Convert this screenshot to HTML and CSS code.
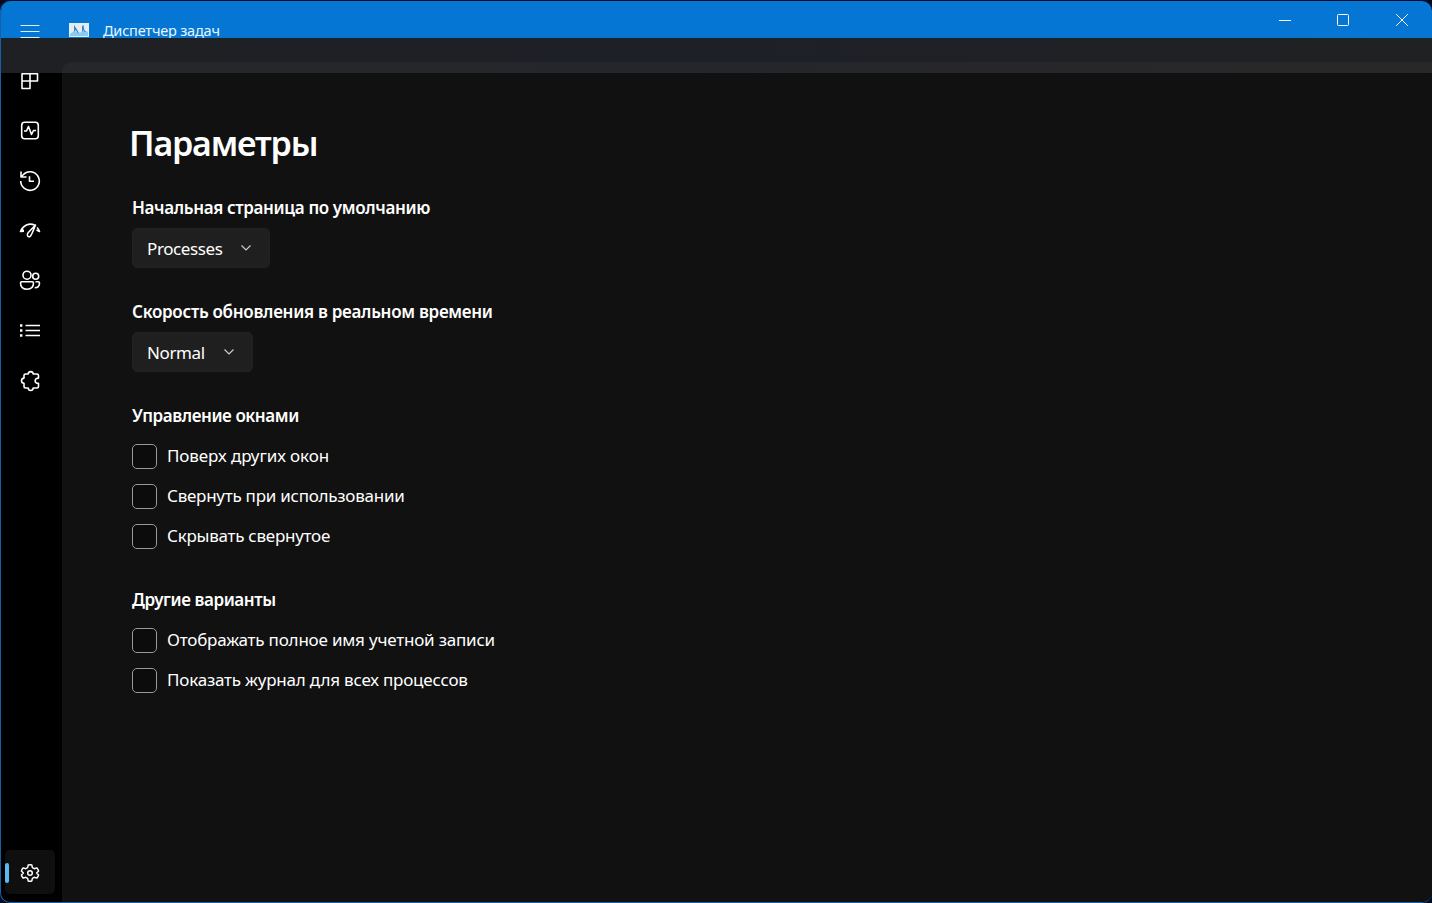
FILE: index.html
```html
<!DOCTYPE html>
<html lang="ru">
<head>
<meta charset="utf-8">
<title>Диспетчер задач</title>
<link rel="stylesheet" href="styles.css">
</head>
<body>
<div class="window">
  <header class="titlebar">
    <svg class="menu" width="20" height="16" viewBox="0 0 20 16"><path d="M.5 3.500h19M.5 9.500h19M.5 15.500h19"/></svg>
    <svg class="app-icon" width="20" height="14" viewBox="0 0 20 14"><path fill="#e2edf5" d="M0 0h20v14H0z"/><path fill="#8ccaf0" d="M1 11l4-3 3 1 3 1 3-3 3 1 2 1v4H1z"/><path fill="#3d86bd" d="M5 9V2l2 3 3 5-1 0-2.500-3zM13 9V3l1.500-1 .8 5 2 2-2-.5-1-1.500z"/></svg>
    <span class="app-title">Диспетчер задач</span>
    <div class="controls">
      <svg width="14" height="14" viewBox="0 0 14 14"><path d="M1 7.500h12"/></svg>
      <svg width="14" height="14" viewBox="0 0 14 14"><rect x="1.500" y="1.500" width="11" height="11" rx="1"/></svg>
      <svg width="14" height="14" viewBox="0 0 14 14"><path d="M1.200 1.200l11.600 11.600M12.800 1.200L1.200 12.800"/></svg>
    </div>
  </header>
  <div class="body">
    <nav class="sidebar">
      <div class="nav-item"><svg viewBox="0 0 24 24"><path d="M4 5.800h15.500v7.200H4zM4 13h8v7.500H4zM12 5.800V13"/></svg></div>
      <div class="nav-item"><svg viewBox="0 0 24 24"><rect x="3.700" y="4.200" width="16.600" height="16.600" rx="3"/><path d="M6 13h2.500l2-4.500 3 8 2-4H18"/></svg></div>
      <div class="nav-item"><svg viewBox="0 0 24 24"><path d="M2.700 13a9.300 9.300 0 1 0 2.500-6.300L3.200 8.700M3 3.500V9h5.500M11.500 8.300v5h4.500"/></svg></div>
      <div class="nav-item"><svg viewBox="0 0 24 24"><path d="M2.500 13.500C5 7.500 11 4.500 16.500 7M5.500 11.500l-3 2 3.500-.3M19 9.500c1.200 1.100 2 2.500 2.500 4L18.500 12M17.500 7L10.300 14.500c-2.200 2.500-.3 5.500 1.900 3.800 1.700-1.500 3-6 5.300-11.300z"/></svg></div>
      <div class="nav-item"><svg viewBox="0 0 24 24"><circle cx="9" cy="7.200" r="4"/><circle cx="17.700" cy="8.200" r="3"/><path d="M3.800 13.700h10.400c.8 0 1.300.5 1.300 1.300 0 3.900-2.400 6.200-6.500 6.200S2.500 18.900 2.500 15c0-.8.500-1.300 1.300-1.300zM17.500 13.700h2.700c.8 0 1.300.5 1.300 1.200 0 3.200-1.700 4.900-4.800 4.900"/></svg></div>
      <div class="nav-item"><svg viewBox="0 0 24 24"><path d="M7.500 7.500H22M7.500 12.500H22M7.500 17.500H22"/><path stroke-width="2.400" d="M2 7.500h2.400M2 12.500h2.400M2 17.500h2.400"/></svg></div>
      <div class="nav-item"><svg viewBox="0 0 24 24"><path d="M7.500 6h2.700c.3-3.200 4.700-3.200 5 0h3.800q1.500 0 1.500 1.500v2.600c-4.500-.3-4.500 5.600 0 5.300v3.100q0 1.500-1.500 1.500h-3.800c-.3 3.300-4.700 3.300-5 0H7.500q-1.500 0-1.500-1.500v-3.100c-3.300-.4-3.300-4.900 0-5.300V7.500q0-1.500 1.500-1.500z"/></svg></div>
      <div class="nav-item selected"><svg viewBox="0 0 24 24"><path d="M9.400 6.200L10 3.300q2-.6 4 0l.6 2.900 2 1.100 2.800-.9q1.500 1.500 2 3.500L19.200 12l2.200 2.100q-.5 2-2 3.500l-2.800-.9-2 1.100-.6 2.900q-2 .6-4 0l-.6-2.900-2-1.100-2.800.9q-1.500-1.500-2-3.500L4.800 12 2.600 9.900q.5-2 2-3.500l2.800.9z"/><circle cx="12" cy="12" r="2.500"/></svg></div>
    </nav>
    <main class="content">
      <h1>Параметры</h1>
      <section class="group">
        <h2 class="start-page">Начальная страница по умолчанию</h2>
        <button class="select">Processes<svg width="12" height="8" viewBox="0 0 12 8"><path d="M1.500 1.500L6 6l4.500-4.500"/></svg></button>
      </section>
      <section class="group">
        <h2 class="speed">Скорость обновления в реальном времени</h2>
        <button class="select short">Normal<svg width="12" height="8" viewBox="0 0 12 8"><path d="M1.500 1.500L6 6l4.500-4.500"/></svg></button>
      </section>
      <section class="group checks">
        <h2>Управление окнами</h2>
        <label><i class="box"></i><span class="on-top">Поверх других окон</span></label>
        <label><i class="box"></i><span>Свернуть при использовании</span></label>
        <label><i class="box"></i><span>Скрывать свернутое</span></label>
      </section>
      <section class="group checks">
        <h2>Другие варианты</h2>
        <label><i class="box"></i><span class="long">Отображать полное имя учетной записи</span></label>
        <label><i class="box"></i><span class="long">Показать журнал для всех процессов</span></label>
      </section>
    </main>
    <div class="backdrop"><div class="backdrop-edge"></div></div>
  </div>
</div>
</body>
</html>
```
FILE: styles.css
```css
* { box-sizing: border-box; }
body {
  margin: 0;
  height: 903px;
  overflow: hidden;
  background: #030b20;
  color: #fff;
  font-family: "Noto Sans", "Open Sans", sans-serif;
  font-size: 17px;
  padding-top: 1px;
}
svg { display: block; flex: none; fill: none; stroke: #fff; }
.window {
  display: flex;
  flex-direction: column;
  height: 902px;
  border: 1px solid #175fa6;
  border-top: 0;
  border-right: 0;
  border-radius: 10px;
  overflow: hidden;
  background: #000;
}
.titlebar {
  display: flex;
  flex: none;
  height: 37px;
  padding-left: 19px;
  background: #0576d4;
}
.menu { margin-top: 21px; stroke: #d8efff; }
.app-icon { margin: 22px 14px 0 29px; stroke: none; }
.app-title {
  margin-top: 19px;
  font-size: 14.5px;
  line-height: 20px;
  letter-spacing: -0.2px;
  white-space: nowrap;
  color: #e8f6ff;
}
.controls { display: flex; gap: 44px; margin: 12px 23px 0 auto; }
.controls svg:last-child { margin-left: 1px; }
.body {
  position: relative;
  display: grid;
  grid-template-columns: 61px 1fr;
  flex: 1;
  min-height: 0;
}
.sidebar { display: flex; flex-direction: column; padding: 17px 7px 8px 4px; }
.nav-item {
  display: flex;
  align-items: center;
  height: 50px;
  padding-left: 13px;
  flex: none;
}
.nav-item svg { width: 24px; height: 24px; stroke-width: 1.6; stroke-linejoin: round; }
.selected {
  position: relative;
  height: 44px;
  margin-top: auto;
  background: #0f0f0f;
  border-radius: 5px;
}
.nav-item.selected svg { width: 22px; height: 22px; margin: 2px 0 0 1px; }
.selected::before {
  content: "";
  position: absolute;
  left: 0;
  top: 13px;
  width: 4px;
  height: 20px;
  border-radius: 2px;
  background: #5bb8f5;
}
.content {
  margin-top: 24px;
  padding: 55px 0 0 70px;
  background: #111;
  border-radius: 10px 0 0 0;
}
h1, h2 { margin: 0; font-weight: 600; white-space: nowrap; }
h1 { font-size: 34px; line-height: 52px; margin-left: -3px; letter-spacing: -1.15px; }
.group { margin-top: 27px; }
.group + .group { margin-top: 32px; }
h2 { font-size: 17px; line-height: 24px; letter-spacing: -0.42px; }
.start-page { letter-spacing: -0.36px; }
.speed { letter-spacing: -0.29px; }
.select {
  display: flex;
  align-items: center;
  justify-content: space-between;
  width: 138px;
  height: 40px;
  margin-top: 8px;
  padding: 0 17px 0 14px;
  border: 1px solid #222;
  border-radius: 5px;
  background: #1f1f1f;
  color: #fff;
  font: inherit;
  letter-spacing: -0.4px;
}
.short { width: 121px; }
.select svg { stroke: #ccc; stroke-width: 1.2; }
label { display: flex; align-items: center; height: 40px; white-space: nowrap; letter-spacing: -0.25px; }
label span { padding-bottom: 2px; }
.on-top { letter-spacing: -0.1px; }
.long { letter-spacing: -0.2px; }
.checks h2 { margin-bottom: 8px; }
.box {
  width: 25px;
  height: 25px;
  margin: 1px 10px 0 0;
  border: 1px solid #999;
  border-radius: 5px;
  background: #0c0c0c;
}
.backdrop {
  position: absolute;
  inset: 0 0 auto 0;
  height: 35px;
  padding: 24px 0 0 61px;
  background: linear-gradient(90deg, #1f2023, #1e2028 50%, #202122);
}
.backdrop-edge {
  height: 11px;
  border-radius: 10px 0 0 0;
  background: linear-gradient(90deg, #26272b, #25262b 50%, #282828);
}
```
